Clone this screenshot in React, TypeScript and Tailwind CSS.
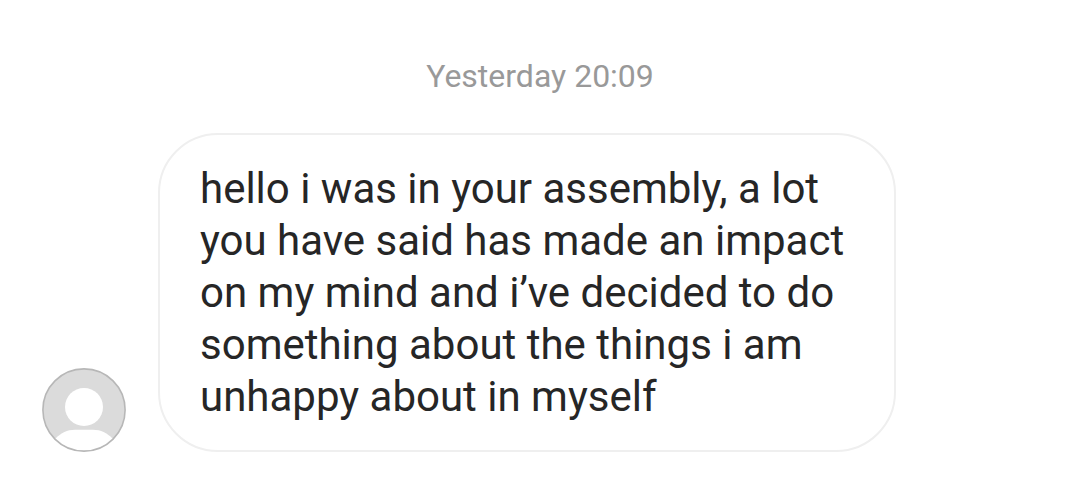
import React from 'react';

// Placeholder picture for accounts without a photo
const DefaultAvatar = () => (
  <svg width="84" height="84" viewBox="0 0 84 84" fill="none" role="img" aria-label="Profile picture" className="shrink-0">
    <defs>
      <clipPath id="avatarClip">
        <circle cx="42" cy="42" r="41" />
      </clipPath>
    </defs>
    <circle cx="42" cy="42" r="41" fill="#DBDBDB" />
    <g clipPath="url(#avatarClip)" fill="#fff">
      <circle cx="42" cy="39" r="19" />
      <path d="M10 74L14 70C19 65 25 61.7 33 61.7H51C59 61.7 65 65 70 70L74 74V84H10Z" />
    </g>
    <circle cx="42" cy="42" r="41.1" stroke="#B7B7B7" strokeWidth="1.6" />
  </svg>
);

const message = {
  sentAt: 'Yesterday 20:09',
  text: 'hello i was in your assembly, a lot you have said has made an impact on my mind and i’ve decided to do something about the things i am unhappy about in myself',
};

export default function App() {
  return (
    <main className="min-h-screen w-full bg-white pt-14 pb-12 font-['Roboto',sans-serif]">
      {/* Timestamp */}
      <time className="block text-center text-[32px] leading-10 text-[#999999]">{message.sentAt}</time>
      {/* Received message */}
      <div className="mt-[37px] flex items-end gap-8 pl-[42px] pr-6">
        <DefaultAvatar />
        <p className="max-w-[738px] rounded-[60px] border-2 border-[#efefef] px-10 pt-7 pb-[27px] text-[42px] leading-[52px] text-[#262626]">
          {message.text}
        </p>
      </div>
    </main>
  );
}
